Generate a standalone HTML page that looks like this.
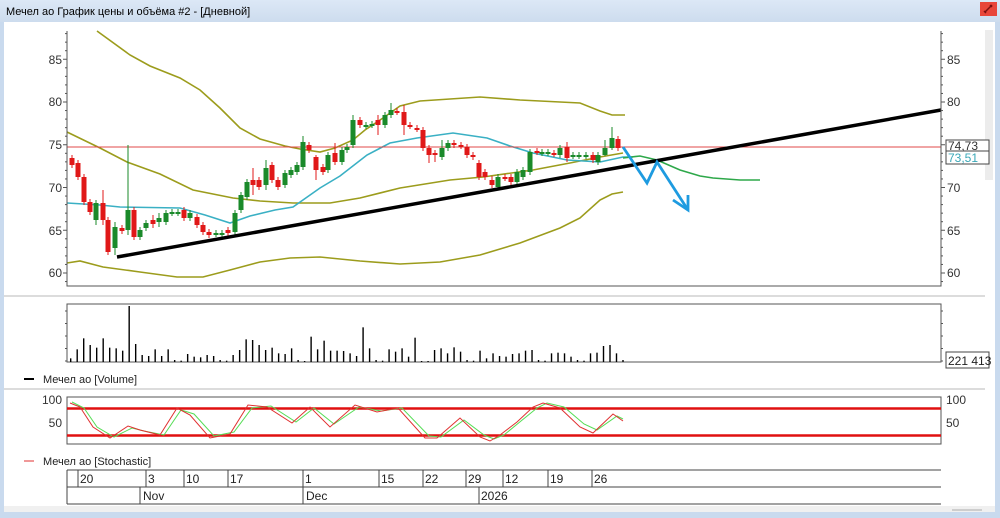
<!DOCTYPE html>
<html><head><meta charset="utf-8">
<style>
html,body{margin:0;padding:0;width:1000px;height:518px;overflow:hidden;background:#c9daee;font-family:"Liberation Sans","DejaVu Sans",sans-serif;}
svg{display:block}
text{font-family:"Liberation Sans","DejaVu Sans",sans-serif;}
</style></head><body>
<svg id="s" width="1000" height="518" viewBox="0 0 1000 518" xmlns="http://www.w3.org/2000/svg">
<defs><linearGradient id="tb" x1="0" y1="0" x2="0" y2="1"><stop offset="0" stop-color="#dce8f6"/><stop offset="1" stop-color="#cddcee"/></linearGradient></defs>
<rect x="0" y="0" width="1000" height="518" fill="#c9daee"/>
<rect x="0" y="0" width="1000" height="22" fill="url(#tb)"/>
<text x="6" y="15" font-size="11" fill="#000">Мечел ао График цены и объёма #2 - [Дневной]</text>
<rect x="980" y="2" width="17" height="14" fill="#e8463a"/>
<path d="M985 12 L992 5 M984 11 l2 2 M990 5 l2 2" stroke="#7a1010" stroke-width="1.5" fill="none"/>
<rect x="4" y="22" width="991" height="490" fill="#fff"/>
<rect x="985" y="30" width="8" height="150" fill="#ececec"/>
<line x1="4" y1="296" x2="985" y2="296" stroke="#dcdcdc" stroke-width="2"/>
<line x1="4" y1="389" x2="985" y2="389" stroke="#dcdcdc" stroke-width="2"/>
<rect x="4" y="506" width="991" height="6" fill="#f0f0f0"/>
<line x1="952" y1="510" x2="982" y2="510" stroke="#aaa"/>

<g id="main"></g>
<path d="M67 31 V286 H941 V31" fill="none" stroke="#555" stroke-width="1"/>
<g font-size="12" fill="#333">
<text x="62" y="64" text-anchor="end">85</text>
<text x="62" y="106" text-anchor="end">80</text>
<text x="62" y="149" text-anchor="end">75</text>
<text x="62" y="192" text-anchor="end">70</text>
<text x="62" y="235" text-anchor="end">65</text>
<text x="62" y="277" text-anchor="end">60</text>
<text x="947" y="64">85</text>
<text x="947" y="106">80</text>
<text x="947" y="192">70</text>
<text x="947" y="235">65</text>
<text x="947" y="277">60</text>
</g>
<rect x="946" y="140" width="43" height="11" fill="#fff" stroke="#444"/>
<text x="948" y="150" font-size="12" fill="#333">74,73</text>
<rect x="946" y="151" width="43" height="13" fill="#fff" stroke="#444"/>
<text x="948" y="162" font-size="12" fill="#3aa8b8">73,51</text>

<rect x="67" y="304" width="874" height="58" fill="none" stroke="#555"/>
<g id="vol"></g>
<rect x="946" y="352" width="43" height="16" fill="#fff" stroke="#444"/>
<text x="948" y="365" font-size="12" fill="#222">221 413</text>
<line x1="24" y1="379" x2="34" y2="379" stroke="#000" stroke-width="2"/>
<text x="43" y="383" font-size="11" fill="#222">Мечел ао [Volume]</text>

<rect x="67" y="397" width="874" height="47" fill="none" stroke="#555"/>
<line x1="67" y1="408.5" x2="941" y2="408.5" stroke="#e01010" stroke-width="2.5"/>
<line x1="67" y1="435.5" x2="941" y2="435.5" stroke="#e01010" stroke-width="2.5"/>
<polyline fill="none" stroke="#55dd55" stroke-width="1" points="72,402 84,408 97,427 114,437 132,428 144,431 164,435 181,410 194,414 214,436 234,432 252,408 271,406 296,422 314,408 334,424 359,407 381,411 402,408 429,436 441,437 464,420 484,435 494,439 504,435 521,421 537,408 547,403 564,407 584,424 597,430 617,416 623,419"/>
<polyline fill="none" stroke="#e03030" stroke-width="1" points="70,403 80,407 93,427 110,438 128,426 140,430 160,435 177,408 190,415 210,438 230,434 248,405 267,407 292,423 310,407 330,427 355,405 377,412 398,408 425,438 437,438 460,418 480,437 490,441 500,435 517,422 533,407 543,403 560,408 580,427 593,433 613,414 623,421"/>
<g font-size="12" fill="#333">
<text x="62" y="404" text-anchor="end">100</text>
<text x="62" y="427" text-anchor="end">50</text>
<text x="946" y="404">100</text>
<text x="946" y="427">50</text>
</g>
<line x1="24" y1="461" x2="34" y2="461" stroke="#e03030" stroke-width="1"/>
<text x="43" y="465" font-size="11" fill="#222">Мечел ао [Stochastic]</text>

<g stroke="#444" fill="none">
<line x1="67" y1="470" x2="941" y2="470"/>
<line x1="67" y1="487" x2="941" y2="487"/>
<line x1="67" y1="504" x2="941" y2="504"/>
<line x1="67" y1="470" x2="67" y2="504"/>
<path d="M78 470V487 M146 470V487 M184 470V487 M228 470V487 M303 470V487 M379 470V487 M423 470V487 M466 470V487 M503 470V487 M548 470V487 M592 470V487 M140 487V504 M303 487V504 M479 487V504"/>
</g>
<g font-size="12" fill="#222">
<text x="80" y="483">20</text><text x="148" y="483">3</text><text x="186" y="483">10</text><text x="230" y="483">17</text>
<text x="305" y="483">1</text><text x="381" y="483">15</text><text x="425" y="483">22</text><text x="468" y="483">29</text>
<text x="505" y="483">12</text><text x="550" y="483">19</text><text x="594" y="483">26</text>
<text x="143" y="500">Nov</text><text x="306" y="500">Dec</text><text x="481" y="500">2026</text>
</g>
</svg>
<script>
var NS="http://www.w3.org/2000/svg";
function el(p,t,a){var e=document.createElementNS(NS,t);for(var k in a)e.setAttribute(k,a[k]);p.appendChild(e);return e;}
var m=document.getElementById("main");
for(var p=59;p<=88;p++){var y=273-(p-60)*8.55;var L=(p%5==0)?4:2;el(m,"line",{x1:67-L,y1:y,x2:67,y2:y,stroke:"#555"});el(m,"line",{x1:941,y1:y,x2:941+L,y2:y,stroke:"#555"});}
var olive="#9c9c1c";
el(m,"polyline",{fill:"none",stroke:olive,"stroke-width":1.6,points:"97,31 130,55 150,66 180,78 200,90 220,108 240,128 260,139 285,146 300,149 320,152 335,148 353,140 365,130 383,118 400,106 420,101 450,99 480,97 520,100 580,103 600,111 612,115 625,115"});
el(m,"polyline",{fill:"none",stroke:olive,"stroke-width":1.6,points:"67,132 100,148 127,162 160,174 193,190 233,198 260,201 293,203 330,203 360,198 400,188 450,180 483,177 533,170 570,163 600,157 623,153"});
el(m,"polyline",{fill:"none",stroke:olive,"stroke-width":1.6,points:"67,263 80,261 103,267 140,272 177,277 203,277 230,270 260,262 290,258 320,257 360,261 400,264 440,262 480,255 520,243 560,228 580,218 600,200 612,194 623,192"});
el(m,"polyline",{fill:"none",stroke:"#3ab0c4","stroke-width":1.6,points:"67,203 100,205 120,207 180,208 205,215 230,223 250,216 275,210 293,207 320,188 340,176 367,155 390,143 417,138 453,133 487,138 510,146 533,153 567,160 600,162 623,157 633,157"});
el(m,"polyline",{fill:"none",stroke:"#2ea84a","stroke-width":1.6,points:"623,158 640,156 657,160 680,170 700,176 713,178 740,180 760,180"});
el(m,"line",{x1:67,y1:147,x2:941,y2:147,stroke:"#e04848","stroke-width":1});
var C=[[72,158,165,0],[78,163,177,0],[84,177,202,0],[90,202,212,0],[96,203,220,1,200,225],[103,203,220,0,190,225],[108,220,252,0],[115,227,248,1,222,255],[122,228,231,0],[128,210,230,1,145,235],[134,210,237,0],[140,230,237,1],[146,223,228,1],[153,220,224,0,215,228],[159,218,222,1,213,227],[166,213,222,1],[172,212,213,1],[178,212,213,1],[184,210,218,0],[190,213,218,1],[197,217,225,0],[203,225,232,0],[209,232,235,0],[216,233,234,1],[222,233,234,1],[228,230,233,0],[235,213,232,1],[241,195,210,1],[247,182,197,1],[253,180,185,0,168,195],[259,180,187,0],[266,168,185,1,160,190],[272,165,180,0],[278,180,187,0],[285,173,185,1],[291,170,175,1],[297,165,172,1],[303,142,167,1,136,170],[309,145,150,0],[316,157,170,0,155,180],[323,167,172,0],[328,155,170,1],[335,153,162,0,143,165],[342,150,162,1],[347,147,150,1],[353,120,145,1,115,148],[360,120,125,0],[366,125,126,1],[372,124,125,1],[378,120,125,0,115,135],[385,115,125,1],[391,110,115,1,103,118],[397,111,112,0],[404,112,125,0,105,135],[410,125,126,0],[417,128,129,0],[423,130,148,0],[429,148,155,0,145,163],[435,153,154,0,150,162],[442,148,157,1,140,160],[448,143,148,1],[454,143,145,0],[461,145,146,0],[467,147,155,0],[473,155,157,0],[479,163,177,0],[485,172,177,0],[492,180,185,0,176,188],[498,177,187,1],[505,177,178,0],[511,177,182,0],[517,172,182,1],[523,170,177,1],[530,152,172,1],[537,151,152,0],[542,152,153,1],[548,152,153,1],[554,153,154,0],[560,148,155,1],[567,147,158,0,142,162],[573,155,156,1],[579,155,156,1],[586,155,156,1],[593,155,160,0],[598,155,162,1],[605,148,155,1,140,156],[612,138,148,1,127,150],[618,139,148,0]];
C.forEach(function(c){var x=c[0],t=c[1],b=c[2],col=c[3]?"#1a8a2a":"#e01818";var h1=c[4]||t-3,h2=c[5]||b+3;
el(m,"line",{x1:x,y1:h1,x2:x,y2:h2,stroke:col,"stroke-width":1});
el(m,"rect",{x:x-2.5,y:t,width:5,height:Math.max(2,b-t),fill:col});});
el(m,"line",{x1:117,y1:257,x2:941,y2:110,stroke:"#000","stroke-width":3.5});
el(m,"polyline",{fill:"none",stroke:"#1e9be0","stroke-width":2.8,points:"623,147 647,183 657,162 688,210"});
el(m,"polyline",{fill:"none",stroke:"#1e9be0","stroke-width":2.8,points:"673,200 688,210 688,195"});
var v=document.getElementById("vol");
var H=[205,178,145,165,173,145,173,175,182,48,162,195,198,178,198,178,210,212,192,200,202,195,198,210,212,195,180,148,150,165,180,173,190,192,175,210,213,140,178,152,182,182,183,190,198,112,175,210,212,178,185,175,200,143,213,213,180,175,190,172,185,210,212,182,205,190,198,200,192,190,182,180,210,212,190,188,190,200,210,212,190,188,168,165,190,210];
var step=(623-70.7)/(H.length-1);
for(var i=0;i<H.length;i++){var x=70.7+i*step;var y=290+H[i]/3;el(v,"line",{x1:x,y1:y,x2:x,y2:362,stroke:"#000","stroke-width":1.4});}
for(var k=0;k<5;k++){var y=311+k*12.5;el(v,"line",{x1:65,y1:y,x2:67,y2:y,stroke:"#555"});el(v,"line",{x1:941,y1:y,x2:943,y2:y,stroke:"#555"});}
</script>
</body></html>
